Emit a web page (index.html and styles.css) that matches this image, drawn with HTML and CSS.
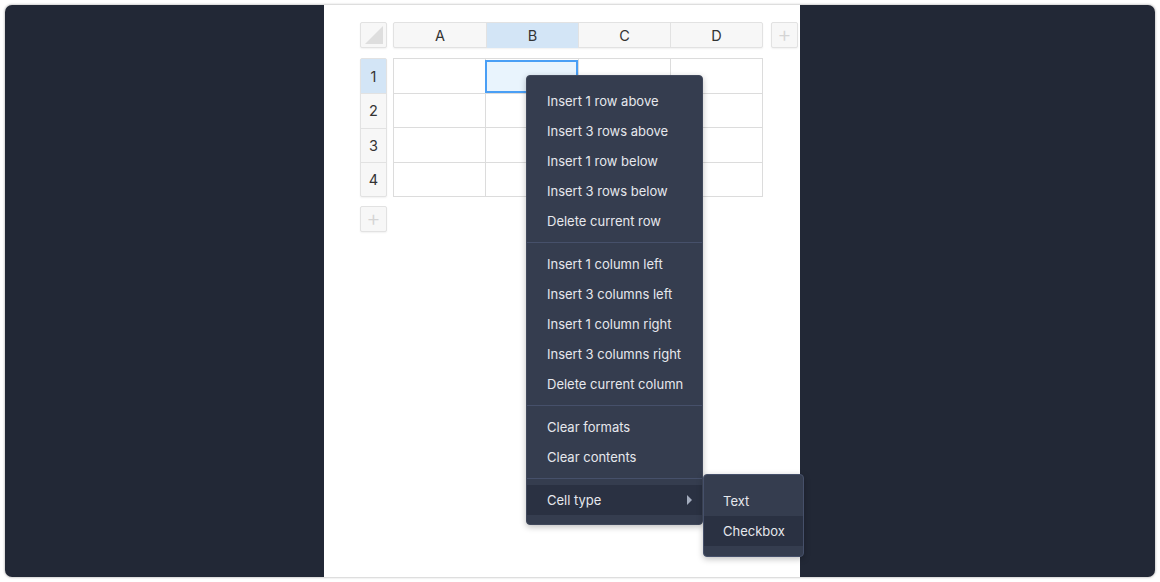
FILE: index.html
```html
<!DOCTYPE html>
<html>
<head>
<meta charset="utf-8">
<link rel="stylesheet" href="styles.css">
</head>
<body>
<div class="frame">
  <div class="side"></div>
  <div class="sheet">
    <div class="toprow">
      <div class="btn corner"><span class="tri"></span></div>
      <div class="colheads">
        <div class="ch">A</div>
        <div class="ch sel">B</div>
        <div class="ch">C</div>
        <div class="ch">D</div>
      </div>
      <div class="btn plus">+</div>
    </div>
    <div class="body">
      <div class="rowheads">
        <div class="rh sel">1</div>
        <div class="rh">2</div>
        <div class="rh">3</div>
        <div class="rh">4</div>
      </div>
      <div class="cells">
        <div class="c"></div><div class="c active"></div><div class="c"></div><div class="c"></div>
        <div class="c"></div><div class="c"></div><div class="c"></div><div class="c"></div>
        <div class="c"></div><div class="c"></div><div class="c"></div><div class="c"></div>
        <div class="c"></div><div class="c"></div><div class="c"></div><div class="c"></div>
      </div>
    </div>
    <div class="btn plus addrow">+</div>

    <div class="menu">
      <div class="item">Insert 1 row above</div>
      <div class="item">Insert 3 rows above</div>
      <div class="item">Insert 1 row below</div>
      <div class="item">Insert 3 rows below</div>
      <div class="item">Delete current row</div>
      <div class="sep"></div>
      <div class="item">Insert 1 column left</div>
      <div class="item">Insert 3 columns left</div>
      <div class="item">Insert 1 column right</div>
      <div class="item">Insert 3 columns right</div>
      <div class="item">Delete current column</div>
      <div class="sep"></div>
      <div class="item">Clear formats</div>
      <div class="item">Clear contents</div>
      <div class="sep"></div>
      <div class="item hover">Cell type<span class="arrow"></span></div>
      <div class="submenu">
        <div class="item">Text</div>
        <div class="item hover">Checkbox</div>
      </div>
    </div>
  </div>
  <div class="side"></div>
</div>
</body>
</html>
```

FILE: styles.css
```css
* { box-sizing: border-box; }
html, body { margin: 0; padding: 0; }
body {
  background: #ffffff;
  width: 1160px;
  height: 582px;
  padding: 5px;
  font-family: Inter, "Noto Sans", sans-serif;
}
.frame {
  width: 1150px;
  height: 572px;
  background: #222836;
  border-radius: 7px;
  box-shadow: 0 0 2px 1px rgba(0,0,0,0.18);
  display: grid;
  grid-template-columns: 319px 476px 1fr;
  overflow: visible;
}
.sheet {
  background: #ffffff;
  position: relative;
  padding: 17px 0 0 36px;
}
.toprow {
  display: flex;
  align-items: flex-start;
  height: 26px;
}
.btn {
  width: 27px;
  height: 26px;
  background: #f7f7f7;
  border: 1px solid #e2e2e2;
  border-radius: 2px;
  box-shadow: 0 1px 2px rgba(0,0,0,0.06);
  position: relative;
}
.corner .tri {
  position: absolute;
  right: 3px;
  bottom: 3px;
  width: 0;
  height: 0;
  border-left: 18px solid transparent;
  border-bottom: 18px solid #dedede;
}
.plus {
  color: #d4d4d4;
  font-size: 22px;
  line-height: 22px;
  text-align: center;
  font-weight: 300;
}
.toprow .plus { margin-left: 8px; }
.colheads {
  margin-left: 6px;
  width: 370px;
  height: 26px;
  display: grid;
  grid-template-columns: repeat(4, 1fr);
  border: 1px solid #e2e2e2;
  border-radius: 2px;
  background: #f7f7f7;
  box-shadow: 0 1px 2px rgba(0,0,0,0.06);
}
.ch {
  font-size: 14.5px;
  color: #333;
  text-align: center;
  line-height: 25px;
  border-left: 1px solid #e2e2e2;
}
.ch:first-child { border-left: none; }
.ch.sel { background: #d3e5f6; }
.body {
  display: flex;
  margin-top: 10px;
  height: 139px;
}
.rowheads {
  width: 27px;
  display: grid;
  grid-template-rows: repeat(4, 1fr);
  border: 1px solid #e2e2e2;
  border-radius: 2px;
  background: #f7f7f7;
  box-shadow: 0 1px 2px rgba(0,0,0,0.06);
}
.rh {
  font-size: 14.5px;
  color: #333;
  display: flex;
  align-items: center;
  justify-content: center;
  border-top: 1px solid #e2e2e2;
}
.rh:first-child { border-top: none; }
.rh.sel { background: #d3e5f6; }
.cells {
  margin-left: 6px;
  width: 370px;
  display: grid;
  grid-template-columns: repeat(4, 1fr);
  grid-template-rows: repeat(4, 1fr);
  border-top: 1px solid #dcdcdc;
  border-left: 1px solid #dcdcdc;
}
.c {
  border-right: 1px solid #dcdcdc;
  border-bottom: 1px solid #dcdcdc;
  position: relative;
}
.c.active::after {
  content: "";
  position: absolute;
  left: -1px; top: 1px; right: 0; bottom: 0;
  border: 2px solid #4a9ff5;
  background: #e9f4fd;
}
.addrow { margin-top: 9px; }

.menu {
  position: absolute;
  left: 202px;
  top: 70px;
  width: 177px;
  background: #353d4f;
  border: 1px solid #41495c;
  border-radius: 4px;
  padding: 10px 0 9px;
  box-shadow: 0 2px 6px rgba(0,0,0,0.25);
  color: #e6e8ed;
  font-size: 13px;
}
.item {
  height: 30px;
  line-height: 30px;
  padding-left: 20px;
  position: relative;
  white-space: nowrap;
}
.item.hover { background: #2a3142; }
.sep {
  height: 1px;
  background: #46506a;
  margin: 6px 0;
}
.arrow {
  position: absolute;
  right: 10px;
  top: 10px;
  width: 0;
  height: 0;
  border-top: 5px solid transparent;
  border-bottom: 5px solid transparent;
  border-left: 5px solid #a3acbd;
}
.submenu {
  position: absolute;
  left: 176px;
  top: 398px;
  width: 101px;
  background: #353d4f;
  border: 1px solid #46506a;
  border-radius: 4px;
  padding: 11px 0 10px;
  box-shadow: 0 2px 6px rgba(0,0,0,0.25);
}
.submenu .item { padding-left: 19px; }
```
